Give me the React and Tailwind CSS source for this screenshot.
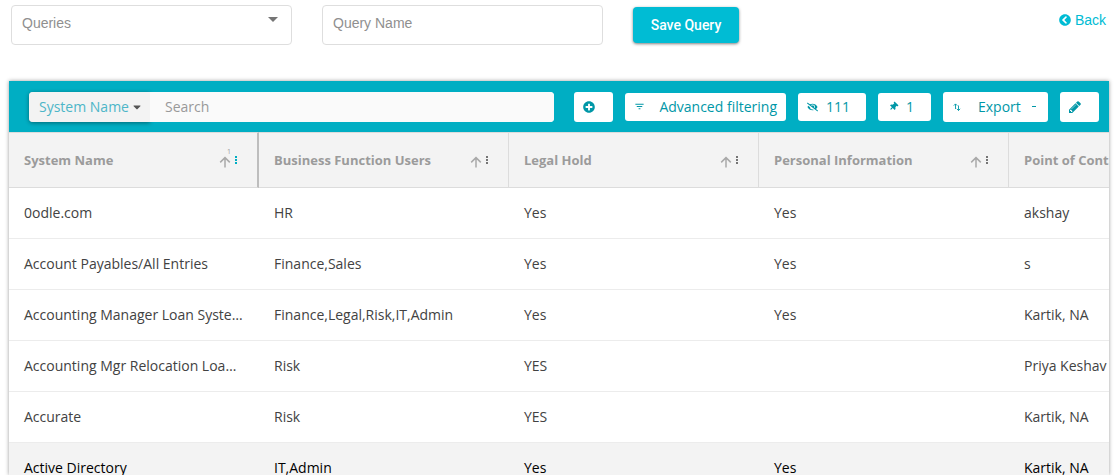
import React, { useState } from 'react';
import { FaCaretDown, FaChevronCircleLeft, FaEyeSlash, FaPlusCircle, FaThumbtack } from 'react-icons/fa';
import { MdFilterList } from 'react-icons/md';

const columns = [
  { key: 'name', label: 'System Name', sorted: true },
  { key: 'users', label: 'Business Function Users' },
  { key: 'hold', label: 'Legal Hold' },
  { key: 'personal', label: 'Personal Information' },
  { key: 'contact', label: 'Point of Contact' },
];

const rows = [
  { name: '0odle.com', users: 'HR', hold: 'Yes', personal: 'Yes', contact: 'akshay' },
  { name: 'Account Payables/All Entries', users: 'Finance,Sales', hold: 'Yes', personal: 'Yes', contact: 's' },
  { name: 'Accounting Manager Loan Systems', users: 'Finance,Legal,Risk,IT,Admin', hold: 'Yes', personal: 'Yes', contact: 'Kartik, NA' },
  { name: 'Accounting Mgr Relocation Loan App', users: 'Risk', hold: 'YES', personal: '', contact: 'Priya Keshav' },
  { name: 'Accurate', users: 'Risk', hold: 'YES', personal: '', contact: 'Kartik, NA' },
  { name: 'Active Directory', users: 'IT,Admin', hold: 'Yes', personal: 'Yes', contact: 'Kartik, NA', active: true },
];

const SortArrow = () => (
  <svg className="h-4 w-3" viewBox="0 -4 12 16" fill="none" stroke="#a9a9a9" strokeWidth="1.5">
    <path d="M6 11.5V2M1.2 6.4 6 1.6l4.8 4.8" />
  </svg>
);

const MenuDots = () => (
  <svg className="h-2 w-1" viewBox="0 0 4 8" fill="currentColor" shapeRendering="crispEdges">
    <path d="M1 0h2v2H1zM1 3h2v2H1zM1 6h2v2H1z" />
  </svg>
);

const ExportIcon = () => (
  <svg className="h-2 w-2" viewBox="0 0 8 8" fill="none" stroke="currentColor" strokeWidth="0.9">
    <path d="M2.5 6V1M.8 2.6 2.5.9l1.7 1.7M5.5 2.5v5M3.8 5.8l1.7 1.7 1.7-1.7" />
  </svg>
);

const PencilIcon = () => (
  <svg className="h-[14px] w-[14px]" viewBox="0 0 1792 1792" fill="currentColor">
    <path d="M491 1536l91-91-235-235-91 91v107h128v128h107zm523-928q0-22-22-22-10 0-17 7l-542 542q-7 7-7 17 0 22 22 22 10 0 17-7l542-542q7-7 7-17zm-54-192l416 416-832 832h-416v-416zm683 96q0 53-37 90l-166 166-416-416 166-165q36-38 90-38 53 0 91 38l235 234q37 39 37 91z" />
  </svg>
);

const ToolButton = ({ className, children, ...props }) => (
  <button
    type="button"
    className={`flex shrink-0 items-center rounded-[3px] bg-white text-[#0097a7] ${className}`}
    {...props}
  >
    {children}
  </button>
);

const App = () => {
  const [query, setQuery] = useState('');
  const [queryName, setQueryName] = useState('');
  const [search, setSearch] = useState('');

  return (
    <div className="flex h-screen flex-col overflow-hidden bg-white font-['Open_Sans',sans-serif] text-sm">
      {/* Saved queries */}
      <div className="flex items-start pl-[11px] pr-[13px] pt-[5px] font-['Liberation_Sans',sans-serif]">
        <div className="relative mr-[30px] w-[281px]">
          <select
            aria-label="Queries"
            value={query}
            onChange={(e) => setQuery(e.target.value)}
            className="h-10 w-full appearance-none rounded border border-[#dedede] bg-white pb-1 pl-[10px] text-[#8f8f8f] outline-none"
          >
            <option value="">Queries</option>
          </select>
          <svg className="pointer-events-none absolute right-[14px] top-3 h-[5px] w-[10px]" viewBox="0 0 10 5" fill="#757575">
            <path d="M0 0h10L5 5z" />
          </svg>
        </div>
        <input
          type="text"
          aria-label="Query Name"
          placeholder="Query Name"
          value={queryName}
          onChange={(e) => setQueryName(e.target.value)}
          className="mr-[30px] h-10 w-[281px] rounded border border-[#dedede] pb-1 pl-[10px] outline-none placeholder:text-[#8f8f8f]"
        />
        <button
          type="button"
          className="mt-0.5 h-9 w-[106px] rounded bg-[#00bcd4] font-['Roboto',sans-serif] font-medium text-white shadow-[0_1px_3px_rgba(0,0,0,0.5)]"
        >
          Save Query
        </button>
        <a href="#back" className="ml-auto flex items-center gap-1 pt-[5px] text-[#00bcd4]">
          <FaChevronCircleLeft className="h-3 w-3" />
          Back
        </a>
      </div>

      {/* Grid */}
      <div className="ml-[9px] mr-[10px] mt-9 overflow-hidden bg-white shadow-[0_0_4px_rgba(0,0,0,0.4)]">
        <div className="flex h-[51px] items-center gap-3 bg-[#00aec3] pl-5 pr-[10px]">
          <div className="mr-2 flex h-[30px] flex-1 rounded bg-[#fafafa]">
            <div className="relative w-[121px]">
              <select
                aria-label="Search column"
                className="h-[30px] w-full appearance-none rounded-l bg-[#f3f3f3] pl-[10px] text-[#4db6c8] shadow-[0_1px_4px_rgba(0,0,0,0.4)] outline-none"
              >
                <option>System Name</option>
              </select>
              <FaCaretDown className="pointer-events-none absolute right-[7px] top-[9px] h-3 w-3 text-[#555]" />
            </div>
            <input
              type="text"
              aria-label="Search"
              placeholder="Search"
              value={search}
              onChange={(e) => setSearch(e.target.value)}
              className="relative min-w-0 flex-1 rounded-r bg-[#fafafa] pl-[15px] outline-none placeholder:text-[#999]"
            />
          </div>
          <ToolButton className="h-[30px] w-[39px] pl-[9px]" aria-label="Add">
            <FaPlusCircle className="h-3 w-3" />
          </ToolButton>
          <ToolButton className="h-7 w-[161px] justify-between pl-[9px] pr-[9px]">
            <MdFilterList className="h-[11px] w-[11px]" />
            Advanced filtering
          </ToolButton>
          <ToolButton className="h-7 w-[68px] gap-2 pl-[9px]">
            <FaEyeSlash className="h-[10px] w-[11px]" />
            111
          </ToolButton>
          <ToolButton className="h-7 w-[53px] gap-2 pl-[11px]">
            <FaThumbtack className="h-[9px] w-[9px] rotate-45" />
            1
          </ToolButton>
          <ToolButton className="h-[30px] w-[105px] pl-[10px]">
            <ExportIcon />
            <span className="ml-[17px] mr-[11px]">Export</span>
            <span className="h-px w-1 bg-[#0097a7]" />
          </ToolButton>
          <ToolButton className="h-[30px] w-[39px] pl-[8px]" aria-label="Edit">
            <PencilIcon />
          </ToolButton>
        </div>

        <table className="w-[1250px] table-fixed border-separate border-spacing-0 text-left">
          <thead>
            <tr>
              {columns.map((col) => (
                <th
                  key={col.key}
                  className={`h-14 border-y border-[#dcdcdc] bg-[#f3f3f3] pl-[15px] pr-[19px] text-[13px] font-bold text-[#9b9b9b] ${
                    col.sorted ? 'border-r-2 border-r-[#bdbdbd]' : 'border-r'
                  }`}
                >
                  <div className="flex items-center justify-between">
                    <span className="whitespace-nowrap">{col.label}</span>
                    <span className="relative flex items-center gap-[3px]">
                      {col.sorted && (
                        <span className="absolute -top-1 left-2 text-[7px] leading-none font-normal">1</span>
                      )}
                      <SortArrow />
                      <button type="button" aria-label="Column menu" className={col.sorted ? 'text-[#00aec3]' : 'text-[#757575]'}>
                        <MenuDots />
                      </button>
                    </span>
                  </div>
                </th>
              ))}
            </tr>
          </thead>
          <tbody>
            {rows.map((row) => (
              <tr key={row.name} className={row.active ? 'bg-[#f3f3f3] text-black' : 'text-[#424242]'}>
                {columns.map((col) => (
                  <td key={col.key} className="h-[51px] truncate border-b border-[#ececec] px-[15px]">
                    {row[col.key]}
                  </td>
                ))}
              </tr>
            ))}
          </tbody>
        </table>
      </div>
    </div>
  );
};

export default App;
